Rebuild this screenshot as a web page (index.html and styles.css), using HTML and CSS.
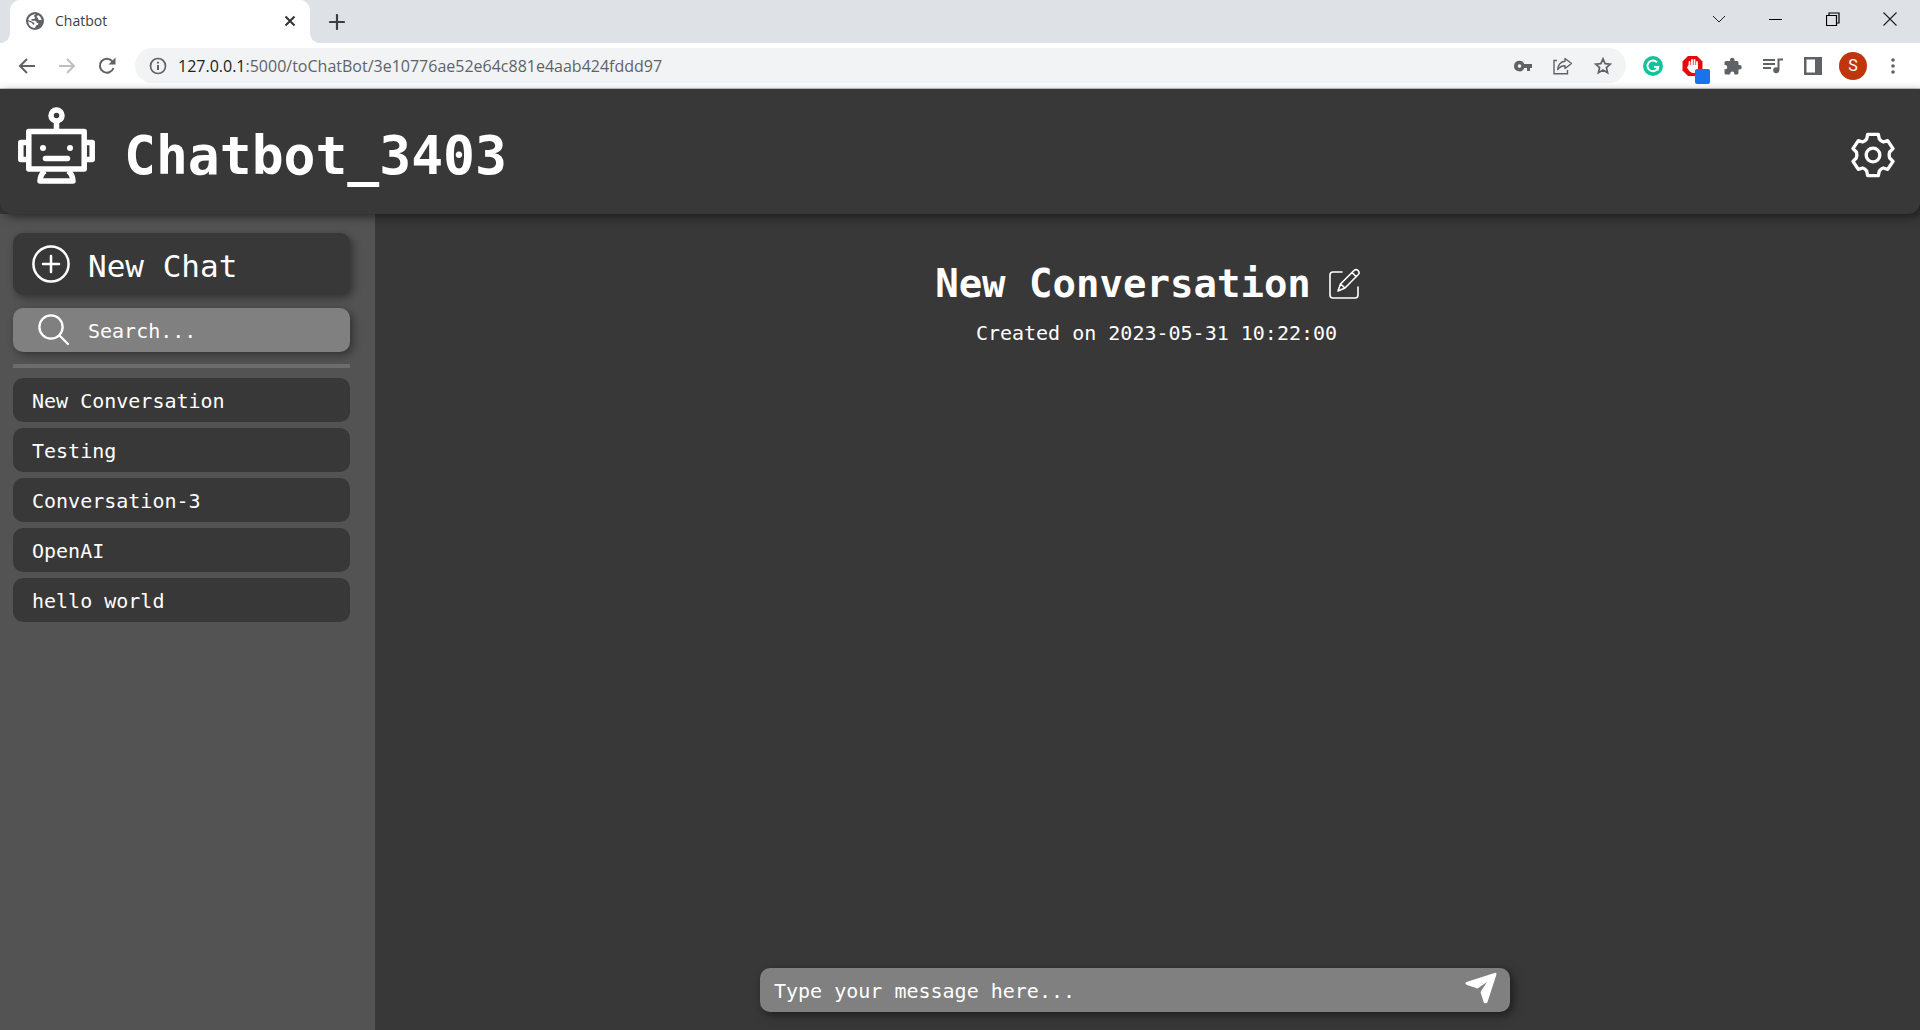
FILE: index.html
```html
<!DOCTYPE html>
<html lang="en">
<head>
<meta charset="utf-8">
<meta name="viewport" content="width=device-width, initial-scale=1">
<title>Chatbot</title>
<link rel="stylesheet" href="styles.css">
</head>
<body>
<div class="browser">
  <div class="tab-strip">
    <div class="tab">
      <svg class="tab-icon" viewBox="0 0 18 18" aria-hidden="true"><circle cx="9" cy="9" r="9" fill="#5f6368"/><path d="M10 2.200 C7.500 3 7.500 4.200 9 5.200 L8.500 7 H5.500 V8.800 H9 Q10.800 9 10.800 11 H12.500 Q12.500 13 10 13.500 L9 15.900 C5 16 2.300 13 2.200 9.300 L6 11 Q6.500 12.500 8 13 L8.500 11 Q5 9 2.200 8 C2.800 4.500 6 2 10 2.200 Z M12 2.900 Q15 4.500 15.800 8 H13 Q11.500 7.500 12 6 L10.500 5 Z" fill="#fff"/></svg>
      <span class="tab-title">Chatbot</span>
      <button class="tab-close" aria-label="Close tab"><svg width="12" height="12" viewBox="0 0 12 12"><path d="M1.500 1.500 L10.500 10.500 M10.500 1.500 L1.500 10.500" stroke="#303336" stroke-width="2"/></svg></button>
    </div>
    <button class="tab-new" aria-label="New tab"><svg width="16" height="16" viewBox="0 0 16 16"><path d="M8 1 V15 M1 8 H15" stroke="#3c4043" stroke-width="2.200" stroke-linecap="round"/></svg></button>
    <div class="window-controls">
      <button aria-label="Search tabs"><svg width="14" height="14" viewBox="0 0 14 14"><path d="M1 4 L7 10 L13 4" fill="none" stroke="#202124"/></svg></button>
      <button aria-label="Minimize"><svg width="14" height="14" viewBox="0 0 14 14"><path d="M0 7.500 H13" stroke="#000"/></svg></button>
      <button aria-label="Restore"><svg width="14" height="14" viewBox="0 0 14 14"><path d="M.5 3.500 H10.500 V13.500 H.5 Z M3 3 V1 H13 V11 H11" fill="none" stroke="#000" stroke-width="1.200"/></svg></button>
      <button aria-label="Close"><svg width="14" height="14" viewBox="0 0 14 14"><path d="M.5 .5 L13.500 13.500 M13.500 .5 L.5 13.500" stroke="#202124" stroke-width="1.200"/></svg></button>
    </div>
  </div>
  <div class="toolbar">
    <div class="tool-group">
      <button aria-label="Back"><svg width="18" height="18" viewBox="0 0 18 18"><path d="M17 9 H2 M9 2 L2 9 L9 16" fill="none" stroke="#5f6368" stroke-width="2"/></svg></button>
      <button aria-label="Forward"><svg width="18" height="18" viewBox="0 0 18 18"><path d="M1 9 H16 M9 2 L16 9 L9 16" fill="none" stroke="#bdbfc2" stroke-width="2"/></svg></button>
      <button aria-label="Reload"><svg width="18" height="18" viewBox="0 0 18 18"><path d="M15.500 11 A7 7 0 1 1 14.500 4.500" fill="none" stroke="#5f6368" stroke-width="2"/><path d="M17.500 .5 V7.500 H10.500 Z" fill="#5f6368"/></svg></button>
    </div>
    <div class="omnibox">
      <svg width="18" height="18" viewBox="0 0 18 18" aria-hidden="true"><circle cx="9" cy="9" r="7.500" fill="none" stroke="#5f6368" stroke-width="1.700"/><path d="M9 8 V13 M9 4.700 V6.500" stroke="#5f6368" stroke-width="2"/></svg>
      <div class="address"><label for="url">127.0.0.1</label><input id="url" type="text" value=":5000/toChatBot/3e10776ae52e64c881e4aab424fddd97"></div>
      <div class="tool-group">
        <button aria-label="Passwords"><svg width="18" height="12" viewBox="0 0 18 12"><path d="M5.500 .7 A5.300 5.300 0 1 0 10.300 8 H13 V11 H16 V8 H18 V4 H10.300 A5.300 5.300 0 0 0 5.500 .7 Z M5.500 4.300 A1.800 1.800 0 1 1 5.500 7.900 A1.800 1.800 0 1 1 5.500 4.300 Z" fill="#5f6368" fill-rule="evenodd"/></svg></button>
        <button aria-label="Share"><svg width="20" height="18" viewBox="0 0 20 18"><path d="M4 3.500 H1 V16.800 H14.500 V13" fill="none" stroke="#5f6368" stroke-width="1.400"/><path d="M12 1.500 L18.500 6.500 L12 11.500 V8.700 C8.500 8.600 6.500 10 4.700 12.700 C5.100 8 7.500 4.800 12 4.300 Z" fill="none" stroke="#5f6368" stroke-width="1.400" stroke-linejoin="round"/></svg></button>
        <button aria-label="Bookmark"><svg width="18" height="18" viewBox="0 0 18 18"><path d="M9 1.800 L11.100 6.600 L16.300 7.100 L12.400 10.500 L13.600 15.700 L9 13 L4.400 15.700 L5.600 10.500 L1.700 7.100 L6.900 6.600 Z" fill="none" stroke="#5f6368" stroke-width="1.700"/></svg></button>
      </div>
    </div>
    <div class="tool-group">
      <button aria-label="Grammar checker"><svg width="20" height="20" viewBox="0 0 20 20"><circle cx="10" cy="10" r="10" fill="#15c39a"/><path d="M14 6.300 A5.400 5.400 0 1 0 15.200 11 H11 M15.200 10.500 L14.700 14.500" fill="none" stroke="#fff" stroke-width="1.900"/></svg></button>
      <button aria-label="Ad blocker"><svg width="36" height="36" viewBox="-7 -7 36 36"><path d="M6 1 H15 L20.500 6.500 V15.500 L15 21 H6 L.5 15.500 V6.500 Z" fill="#e60b0b"/><path d="M7.500 12 V7 M10 11 V5 M12.500 11 V5 M15 12 V7" stroke="#fff" stroke-width="1.800" stroke-linecap="round"/><path d="M6.600 10 H16 V14 Q15 18 11.500 18 Q8 18 5 12.500 Z" fill="#fff"/><rect x="13" y="14" width="15" height="15" rx="2" fill="#1a73e8"/></svg></button>
      <button aria-label="Extensions"><svg width="18" height="18" viewBox="0 0 18 18"><path d="M6 4 V3 A2.300 2.300 0 0 1 10.600 3 V4 H13 Q14.500 4 14.500 5.500 V8 H15.500 A2.200 2.200 0 0 1 15.500 12.500 H14.500 V16 Q14.500 17.500 13 17.500 H10.300 V16.500 A2 2 0 0 0 6.200 16.500 V17.500 H2 Q.5 17.500 .5 16 V12.300 H1.500 A2.200 2.200 0 0 0 1.500 8 H.5 V5.500 Q.5 4 2 4 Z" fill="#5f6368"/></svg></button>
      <button aria-label="Media controls"><svg width="20" height="16" viewBox="0 0 20 16"><path d="M0 2 H12 M0 6 H12 M0 10 H8 M15.500 12 V1.500 H20" fill="none" stroke="#5f6368" stroke-width="2"/><circle cx="13.200" cy="12.300" r="3" fill="#5f6368"/></svg></button>
      <button aria-label="Side panel"><svg width="18" height="18" viewBox="0 0 18 18"><path d="M0 0 H18 V18 H0 Z M2.500 2.500 V15.500 H11 V2.500 Z" fill="#5f6368" fill-rule="evenodd"/></svg></button>
      <button aria-label="Profile"><span class="avatar">S</span></button>
      <button aria-label="Menu"><svg width="4" height="16" viewBox="0 0 4 16"><circle cx="2" cy="2" r="1.800" fill="#5f6368"/><circle cx="2" cy="8" r="1.800" fill="#5f6368"/><circle cx="2" cy="14" r="1.800" fill="#5f6368"/></svg></button>
    </div>
  </div>
</div>

<header class="app-header">
  <svg class="robot" viewBox="0 0 77 77" fill="none" stroke="#fff" stroke-width="5.500" stroke-linejoin="round" aria-hidden="true">
    <circle cx="38.500" cy="8.500" r="5.500"/>
    <path d="M38.500 14 V24 M10.800 24.500 H66.200 V62 H10.800 Z"/>
    <path d="M11 35.500 H2.800 V52.500 H11 M66 35.500 H74.200 V52.500 H66"/>
    <path d="M27 64 Q22.500 67 22 74 H55 Q54.500 67 50 64"/>
    <path d="M27.500 51.500 H49.500" stroke-linecap="round"/>
    <circle cx="25" cy="41" r="3" fill="#fff" stroke="none"/><circle cx="52" cy="41" r="3" fill="#fff" stroke="none"/>
  </svg>
  <h1>Chatbot_3403</h1>
  <button class="settings" aria-label="Settings">
    <svg width="44" height="46" viewBox="153 96 132 138" fill="none" stroke="#fff" stroke-width="10" stroke-linejoin="round"><path d="M203 103 H235 L238 117 Q243 124 250 126 L263 122 L279 146 L269 156 Q266 165 269 174 L279 184 L263 208 L250 204 Q243 206 238 213 L235 227 H203 L200 213 Q195 206 188 204 L175 208 L159 184 L169 174 Q172 165 169 156 L159 146 L175 122 L188 126 Q195 124 200 117 Z"/><circle cx="219" cy="165" r="20.500"/></svg>
  </button>
</header>

<div class="app-body">
  <aside class="sidebar">
    <button class="new-chat">
      <svg width="38" height="38" viewBox="0 0 38 38" fill="none" stroke="#fff" stroke-width="2.500" stroke-linecap="round" aria-hidden="true"><circle cx="19" cy="19" r="17.600"/><path d="M19 11 V27 M11 19 H27"/></svg>
      <span>New Chat</span>
    </button>
    <div class="search">
      <label for="search" aria-label="Search"><svg width="32" height="32" viewBox="0 0 32 32" fill="none" stroke="#fff" stroke-width="2.300" stroke-linecap="round"><circle cx="13" cy="13" r="11.600"/><path d="M21.500 21.500 L30 30"/></svg></label>
      <input id="search" type="text" placeholder="Search...">
    </div>
    <hr class="divider">
    <nav class="chats">
      <a href="#">New Conversation</a>
      <a href="#">Testing</a>
      <a href="#">Conversation-3</a>
      <a href="#">OpenAI</a>
      <a href="#">hello world</a>
    </nav>
  </aside>
  <main class="conversation">
    <div class="title-row">
      <h2>New Conversation</h2>
      <button class="rename" aria-label="Rename conversation"><svg width="31" height="32" viewBox="0 0 31 32" fill="none" stroke="#fff" stroke-width="1.600" stroke-linecap="round" stroke-linejoin="round"><path d="M13 4 H4 Q1 4 1 7 V27 Q1 30 4 30 H26 Q29 30 29 27 V19"/><path d="M9 23 L11.500 16 L25 2.500 Q27 .7 29 2.500 Q31 4.500 29.300 6.500 L16 20 Z M23 4.500 L27.300 8.700 M11.500 16 L16 20"/></svg></button>
    </div>
    <p class="created">Created on 2023-05-31 10:22:00</p>
    <form class="composer">
      <input type="text" aria-label="Message" placeholder="Type your message here...">
      <button type="submit" aria-label="Send"><svg width="32" height="32" viewBox="0 0 32 32"><path d="M29.500 1 Q32 0 31.300 3 L22.500 30 Q21.500 32 19.500 31 Q18.500 30.500 18.300 29 L15.500 20 L22 10 L12.500 16.500 L2 13 Q-1 11.500 1.500 10 Z" fill="#fff"/></svg></button>
    </form>
  </main>
</div>
</body>
</html>
```
FILE: styles.css
```css
* { box-sizing: border-box; }

body {
  margin: 0;
  min-height: 100vh;
  display: flex;
  flex-direction: column;
  background: #383838;
  color: #fff;
  font-family: "DejaVu Sans Mono", monospace;
  font-size: 20px;
  line-height: 24px;
}

button, input {
  border: 0;
  padding: 0;
  margin: 0;
  background: none;
  color: inherit;
  font: inherit;
  outline: none;
}

button {
  display: flex;
  align-items: center;
  justify-content: center;
  cursor: pointer;
}

svg { flex: none; }

/* Browser frame */
.browser {
  background: #fff;
  border-bottom: 1px solid #c9cacb;
  font-family: "Open Sans", sans-serif;
  color: #202124;
}

.tab-strip {
  display: flex;
  align-items: stretch;
  height: 43px;
  padding-left: 10px;
  background: #dee1e6;
}

.tab {
  position: relative;
  display: flex;
  align-items: center;
  width: 300px;
  padding: 0 8px 2px 16px;
  border-radius: 10px 10px 0 0;
  background: #fff;
}

.tab::before, .tab::after {
  content: "";
  position: absolute;
  bottom: 0;
  width: 10px;
  height: 10px;
}

.tab::before { right: 100%; background: radial-gradient(circle at 0 0, #dee1e6 10px, #fff 10px); }
.tab::after { left: 100%; background: radial-gradient(circle at 100% 0, #dee1e6 10px, #fff 10px); }

.tab-icon { width: 18px; height: 18px; }

.tab-title {
  flex: 1;
  margin-left: 11px;
  font-size: 14px;
  color: #3c4043;
}

.tab-close { width: 24px; }
.tab-new { width: 34px; margin-left: 10px; }

.window-controls {
  display: flex;
  height: 37px;
  margin: 0 2px 0 auto;
}

.window-controls button { width: 57px; }

.toolbar {
  display: flex;
  align-items: center;
  height: 45px;
  padding: 0 7px;
}

.tool-group { display: flex; }
.tool-group button { width: 40px; height: 34px; }

.omnibox {
  flex: 1;
  display: flex;
  align-items: center;
  height: 35px;
  margin: 0 7px 0 8px;
  padding: 0 3px 0 14px;
  border-radius: 18px;
  background: #f1f3f4;
}

.address {
  flex: 1;
  display: flex;
  margin-left: 11px;
  font-size: 16px;
}

.address input { flex: 1; color: #5f6368; }

.avatar {
  width: 28px;
  height: 28px;
  border-radius: 50%;
  background: #bf360c;
  color: #fff;
  font: 16px/28px Roboto, sans-serif;
}

/* Application header */
.app-header {
  position: relative;
  display: flex;
  align-items: center;
  height: 125px;
  padding: 0 25px 0 18px;
  border-radius: 0 0 12px 12px;
  background: #383838;
  box-shadow: 3px 3px 10px rgba(0, 0, 0, .5);
}

.robot { width: 77px; height: 77px; margin-bottom: 12px; }

h1 {
  margin: 8px 0 0 29px;
  font-size: 53px;
  line-height: 60px;
}

.settings { margin: 6px 0 0 auto; }

.app-body { flex: 1; display: flex; }

/* Sidebar */
.sidebar {
  width: 375px;
  padding: 19px 25px 19px 13px;
  background: #535353;
}

.new-chat {
  width: 100%;
  height: 62px;
  justify-content: flex-start;
  gap: 18px;
  padding: 0 19px;
  border-radius: 10px;
  background: #383838;
  box-shadow: 3px 3px 8px rgba(0, 0, 0, .4);
  font-size: 31px;
}

.new-chat span { padding-top: 4px; }

.search {
  display: flex;
  align-items: center;
  height: 44px;
  margin-top: 13px;
  padding-left: 25px;
  border-radius: 10px;
  background: #808080;
  box-shadow: 3px 3px 8px rgba(0, 0, 0, .4);
}

.search label { display: flex; }
.search input { flex: 1; min-width: 0; height: 44px; margin-left: 18px; padding-top: 2px; }

::placeholder { color: #fff; opacity: 1; }

.divider {
  height: 4px;
  margin: 12px 0 10px;
  border: 0;
  background: #6c6c6c;
}

.chats { display: grid; gap: 6px; }

.chats a {
  padding: 11px 19px 9px;
  border-radius: 10px;
  background: #383838;
  color: #fff;
  text-decoration: none;
}

/* Conversation */
.conversation {
  flex: 1;
  display: flex;
  flex-direction: column;
  align-items: center;
  padding: 44px 0 18px;
}

.title-row { display: flex; align-items: center; gap: 18px; }

h2 {
  margin: 0;
  font-size: 39px;
  line-height: 52px;
}

.created { margin: 11px 0 0; padding-left: 18px; }

.composer {
  display: flex;
  width: 750px;
  max-width: 90%;
  height: 44px;
  margin: auto 25px 0 0;
  padding: 0 13px 0 14px;
  border-radius: 10px;
  background: #808080;
  box-shadow: 3px 3px 10px rgba(0, 0, 0, .5);
}

.composer input { flex: 1; min-width: 0; padding-top: 2px; }
.composer button { height: 40px; }
```
